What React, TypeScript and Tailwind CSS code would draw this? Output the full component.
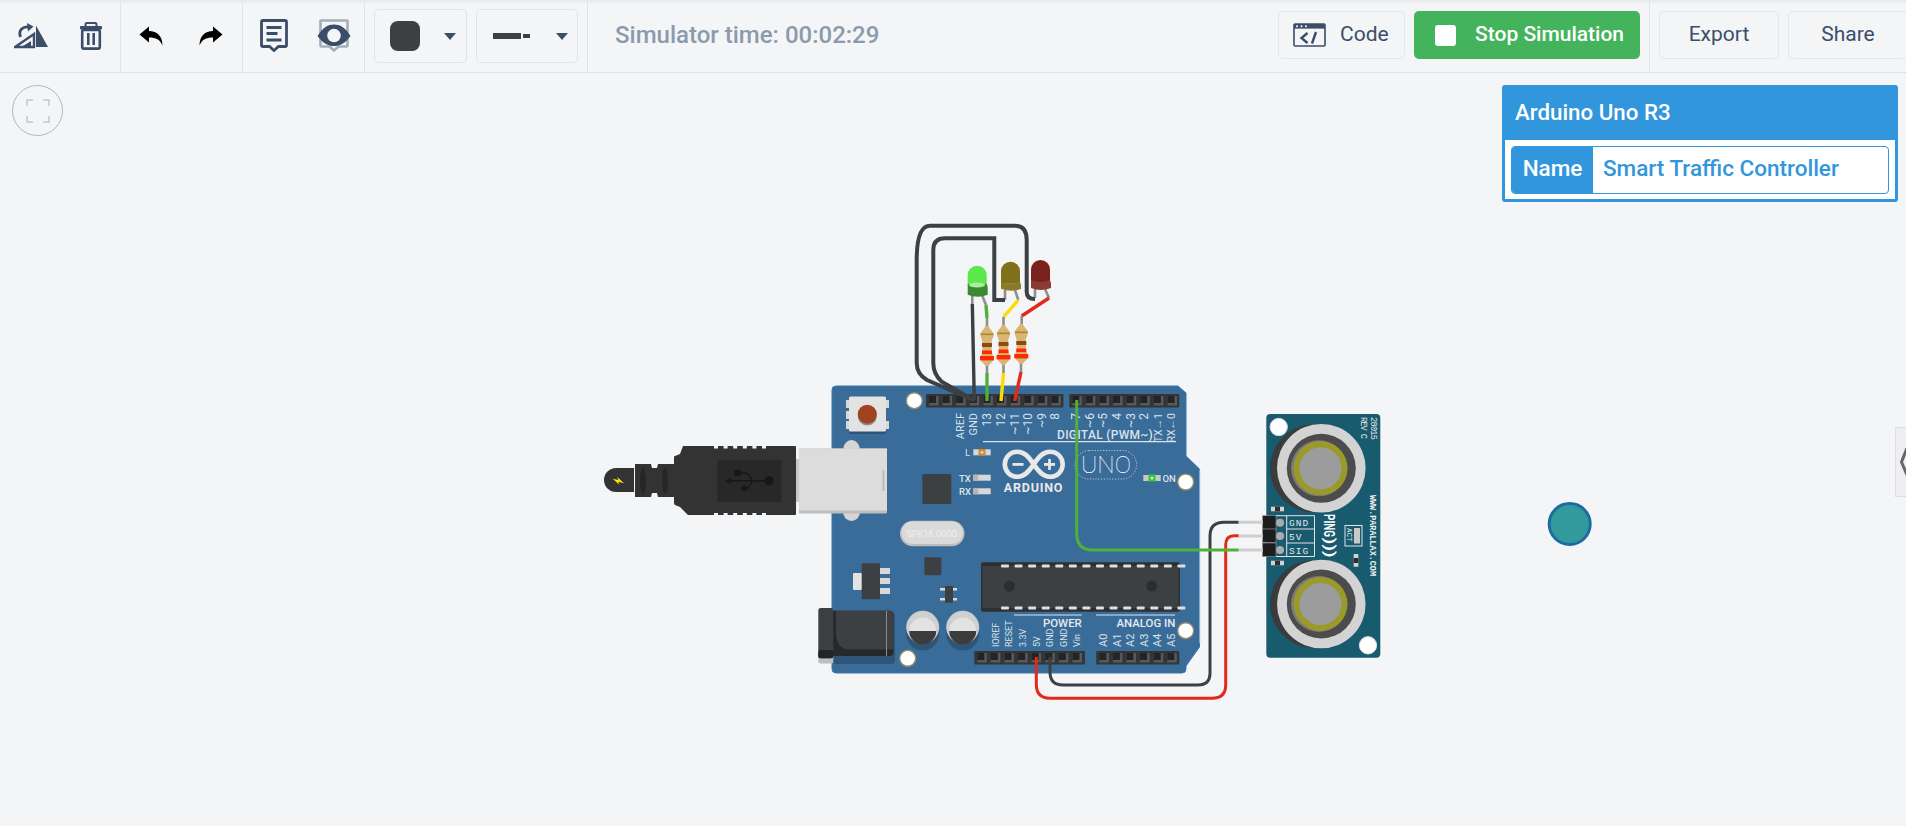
import React from 'react';

const range = (n: number) => Array.from({ length: n }, (_, i) => i);

const FlipIcon = () => (
    <svg width="36" height="26" viewBox="0 0 36 26" className="ml-[2px]">
        <path d="M22 2.5 L34 24 L22 24 Z" fill="#3a4e69" />
        <path d="M1 24 L20 24 L20 11 Z" fill="none" stroke="#3a4e69" strokeWidth="2.4" strokeLinejoin="miter" />
        <path d="M6.5 14 C4 7 9 3 15 4" fill="none" stroke="#3a4e69" strokeWidth="2.8" />
        <path d="M13 0 L19.5 3.6 L14 8.5 Z" fill="#3a4e69" />
        <path d="M9 23 L17 23 L17 18 Z" fill="#3a4e69" />
    </svg>
);

const TrashIcon = () => (
    <svg width="24" height="28" viewBox="0 0 24 28">
        <path d="M6.5 4 V2.5 Q6.5 1 8 1 H16 Q17.5 1 17.5 2.5 V4" fill="none" stroke="#3a4e69" strokeWidth="2" />
        <rect x="1" y="4" width="22" height="3.4" rx="1" fill="#3a4e69" />
        <rect x="3.2" y="8" width="17.6" height="18.6" rx="1.5" fill="none" stroke="#3a4e69" strokeWidth="2.6" />
        <rect x="8" y="11" width="2.6" height="12" fill="#3a4e69" />
        <rect x="13.4" y="11" width="2.6" height="12" fill="#3a4e69" />
    </svg>
);

const UndoIcon = ({ flip }: { flip?: boolean }) => (
    <svg width="24" height="20" viewBox="0 0 24 20" className={flip ? '-scale-x-100' : ''}>
        <path d="M0.5 8.5 L10 0.5 V5 C18 5 23.5 10 23.5 19.5 C21 13.5 17 11.5 10 11.5 V16.5 Z" fill="#000" />
    </svg>
);

const NoteIcon = () => (
    <svg width="28" height="33" viewBox="0 0 28 33">
        <path d="M3 1.5 H25 Q26.5 1.5 26.5 3 V26 Q26.5 27.5 25 27.5 H18.5 L14 31.5 L9.5 27.5 H3 Q1.5 27.5 1.5 26 V3 Q1.5 1.5 3 1.5 Z" fill="none" stroke="#3a4e69" strokeWidth="2.8" />
        <rect x="6.5" y="7" width="15" height="3" fill="#3a4e69" />
        <rect x="6.5" y="13" width="11" height="3" fill="#3a4e69" />
        <rect x="6.5" y="19.5" width="15" height="3" fill="#3a4e69" />
    </svg>
);

const EyeIcon = () => (
    <svg width="34" height="33" viewBox="0 0 34 33">
        <path d="M4 1.5 H30 Q30.5 1.5 30.5 2 V26.5 Q30.5 27.5 29.5 27.5 H21.5 L17 31.5 L12.5 27.5 H4.5 Q3.5 27.5 3.5 26.5 V2 Q3.5 1.5 4 1.5 Z" fill="none" stroke="#a4aeba" strokeWidth="2.6" />
        <path d="M0.5 17 C6 8 11 5.5 17 5.5 C23 5.5 28 8 33.5 17 C28 24.5 23 27 17 27 C11 27 6 24.5 0.5 17 Z" fill="#3a4e69" />
        <circle cx="17" cy="16.5" r="6.8" fill="#f4f5f7" />
    </svg>
);

const CodeIcon = () => (
    <svg width="33" height="24" viewBox="0 0 33 24">
        <rect x="1" y="1" width="31" height="22" rx="1" fill="none" stroke="#3a4e69" strokeWidth="1.6" />
        <rect x="1" y="1" width="31" height="4.6" fill="#3a4e69" />
        <circle cx="4" cy="3.2" r="1" fill="#fff" />
        <circle cx="8.5" cy="3.2" r="1" fill="#fff" />
        <circle cx="13" cy="3.2" r="1" fill="#fff" />
        <path d="M14.5 10 L8.5 15 L14.5 20" fill="none" stroke="#3a4e69" strokeWidth="2.4" />
        <path d="M23 9 L19 20.5" fill="none" stroke="#3a4e69" strokeWidth="2.4" />
    </svg>
);

const Caret = () => <span className="h-0 w-0 border-x-[6px] border-t-[7px] border-x-transparent border-t-[#3a4e69]" />;

const IconButton = ({ children }: { children: React.ReactNode }) => (
    <button className="flex h-[71px] w-[60px] shrink-0 items-center justify-center">{children}</button>
);

const Toolbar = () => (
    <header className="relative flex h-[73px] shrink-0 overflow-hidden border-b border-[#dfe2e7]">
        <div className="absolute inset-x-0 top-0 h-[4px] bg-gradient-to-b from-[#e6e7e9] to-transparent" />
        <div className="flex w-[121px] shrink-0 border-r border-[#e0e3e7] pl-[1px]">
            <IconButton><FlipIcon /></IconButton>
            <IconButton><TrashIcon /></IconButton>
        </div>
        <div className="flex w-[122px] shrink-0 border-r border-[#e0e3e7]">
            <IconButton><UndoIcon /></IconButton>
            <IconButton><UndoIcon flip /></IconButton>
        </div>
        <div className="flex w-[122px] shrink-0 border-r border-[#e0e3e7] pl-[1px]">
            <IconButton><NoteIcon /></IconButton>
            <IconButton><EyeIcon /></IconButton>
        </div>
        <div className="flex w-[223px] shrink-0 items-center gap-[9px] border-r border-[#e0e3e7] pl-[9px]">
            <div className="flex h-[54px] w-[93px] items-center rounded-[5px] border border-[#e0e3e7] pl-[15px]">
                <span className="h-[30px] w-[30px] rounded-[8px] bg-[#3c4043]" />
                <span className="ml-[24px] flex"><Caret /></span>
            </div>
            <div className="flex h-[54px] w-[102px] items-center rounded-[5px] border border-[#e0e3e7] pl-[16px]">
                <span className="h-[6px] w-[28px] bg-[#3c4043]" />
                <span className="ml-[2px] h-[4px] w-[7px] bg-[#3c4043]" />
                <span className="ml-[26px] flex"><Caret /></span>
            </div>
        </div>
        <div className="flex flex-1 items-center pb-[2px] pl-[27px] text-[24px] font-medium text-[#8c9aad]">Simulator time: 00:02:29</div>
        <div className="flex w-[628px] shrink-0 items-start text-[21px]">
            <button className="mt-[11px] flex h-[48px] w-[127px] shrink-0 items-center rounded-[5px] border border-[#e3e6ea] pl-[14px] text-[#3a4e69]">
                <CodeIcon />
                <span className="ml-[14px]">Code</span>
            </button>
            <button className="ml-[9px] mt-[11px] flex h-[48px] w-[226px] shrink-0 items-center rounded-[5px] bg-[#44b45c] pl-[21px] font-medium text-white">
                <span className="h-[21px] w-[21px] rounded-[3px] bg-white" />
                <span className="ml-[19px] whitespace-nowrap">Stop Simulation</span>
            </button>
            <div className="ml-[9px] h-[71px] w-[1px] shrink-0 bg-[#e0e3e7]" />
            <button className="ml-[9px] mt-[11px] h-[48px] w-[120px] shrink-0 rounded-[5px] border border-[#e3e6ea] text-[#3a4e69]">Export</button>
            <button className="ml-[9px] mt-[11px] h-[48px] w-[120px] shrink-0 rounded-[5px] border border-[#e3e6ea] text-[#3a4e69]">Share</button>
        </div>
    </header>
);

const Pins = ({ x, y, n, w }: { x: number; y: number; n: number; w: number }) => (
    <g>
        <rect x={x} y={y} width={w} height="13.4" fill="#333536" rx="1" />
        {range(n).map((i) => (
            <g key={i}>
                <rect x={x + 3 + i * 13.6} y={y + 2} width="9.5" height="9.5" fill="#58595a" />
                <rect x={x + 3 + i * 13.6} y={y + 2} width="7" height="7" fill="#232425" />
            </g>
        ))}
    </g>
);

const Hole = ({ x, y }: { x: number; y: number }) => <circle cx={x} cy={y} r="8" fill="#fff" stroke="#8e8f63" strokeWidth="1.4" />;

const RotLabel = ({ x, y, t, end, size = 11 }: { x: number; y: number; t: string; end?: boolean; size?: number }) => (
    <text
        transform={`translate(${x} ${y}) rotate(-90)`}
        textAnchor={end ? 'end' : 'start'}
        fontSize={size}
        fill="#dbe3ea"
        dominantBaseline="middle"
    >
        {t}
    </text>
);

const Resistor = ({ x, y }: { x: number; y: number }) => (
    <g transform={`translate(${x} ${y})`}>
        <path d="M-1.5 -1 C-3 3 -6.5 4 -6.5 8 C-6.5 11 -4.6 12 -4.6 16 V24 C-4.6 27 -6.5 28 -6.5 31 C-6.5 35 -3 36 -1.5 39 H1.5 C3 36 6.5 35 6.5 31 C6.5 28 4.6 27 4.6 24 V16 C4.6 12 6.5 11 6.5 8 C6.5 4 3 3 1.5 -1 Z" fill="#d9b477" />
        <rect x="-6.5" y="6.5" width="13" height="1.6" fill="#a78a24" />
        <rect x="-5" y="16" width="10" height="4" fill="#8a4a10" />
        <rect x="-5" y="23.5" width="10" height="3.6" fill="#ff2a00" />
        <rect x="-7" y="29" width="14" height="4.4" fill="#ff2a00" />
    </g>
);

const Led = ({ x, top, h, fill, base, baseH }: { x: number; top: number; h: number; fill: string; base: string; baseH: number }) => (
    <g>
        <path d={`M${x} ${top + 9.5} a9.5 9.5 0 0 1 19 0 V${top + h} H${x} Z`} fill={fill} />
        <path d={`M${x} ${top + h - 2} Q${x + 9.5} ${top + h + 2} ${x + 19} ${top + h - 2} L${x + 20} ${top + h + 1} V${top + h + baseH - 4} Q${x + 10} ${top + h + baseH} ${x} ${top + h + baseH - 4} Z`} fill={base} />
    </g>
);

const PingEye = ({ cy }: { cy: number }) => (
    <g>
        <circle cx="1314" cy={cy} r="44" fill="#3a3b3c" />
        <circle cx="1321.3" cy={cy} r="44.3" fill="#d3d3d3" />
        <circle cx="1321.3" cy={cy} r="34.5" fill="#4c4c4c" />
        <circle cx="1319" cy={cy} r="28" fill="#7b7b7b" />
        <circle cx="1320.5" cy={cy} r="27" fill="#9a9a2c" />
        <circle cx="1320.5" cy={cy} r="21" fill="#9c9c9c" />
    </g>
);

const Circuit = () => (
    <svg width="1906" height="753" viewBox="0 73 1906 753" className="absolute left-0 top-0">
        {/* usb cable */}
        <path d="M634 468 H616 A12 12 0 0 0 616 492 H634 Z" fill="#333" />
        <path d="M635 464 H651 L652 468 H657 L658 464 H674 V497 H658 L657 493 H652 L651 497 H635 Z" fill="#333" />
        <ellipse cx="643" cy="480.5" rx="3" ry="13" fill="#262626" />
        <ellipse cx="665" cy="480.5" rx="3" ry="13" fill="#262626" />
        <path d="M612.7 478.7 L618.3 480 L617.3 477 L624 483.3 L618.3 481.7 L619.3 484.7 Z" fill="#ffe000" />
        {/* board */}
        <path d="M836 386 H1178 L1186 393 V456 L1199.5 469 V647 L1186 666 V669 Q1186 673 1182 673 H836 Q832 673 832 669 V390 Q832 386 836 386 Z" fill="#396c99" stroke="#3a76ad" strokeWidth="1" />
        <line x1="1200" y1="470" x2="1200" y2="643" stroke="#cfe2f3" strokeWidth="1" />
        <ellipse cx="851.5" cy="450" rx="8.5" ry="10" fill="#d5d5d5" />
        <ellipse cx="851.5" cy="512" rx="8.5" ry="9" fill="#d5d5d5" />
        {/* usb socket */}
        <rect x="795" y="459" width="6" height="43" fill="#c9c9c9" />
        <rect x="799" y="448.5" width="88" height="65" rx="1" fill="#bdbdbd" />
        <rect x="799" y="448.5" width="88" height="62" fill="#dcdcdc" />
        <rect x="882.5" y="470" width="2" height="21" fill="#bcbcbc" />
        <path d="M683 446 H795 Q796 446 796 447 V514 Q796 515 795 515 H688 L680 507 L675 505 Q674 504 674 503 V457 Q674 456 675 456 L680 454 Z" fill="#333" />
        {range(6).map((i) => (
            <g key={i}>
                <rect x={714 + i * 9.6} y="446" width="4" height="2.5" fill="#f4f5f7" />
                <rect x={714 + i * 9.6} y="513" width="4" height="2.5" fill="#f4f5f7" />
            </g>
        ))}
        <rect x="717.5" y="460" width="64" height="42" fill="#282828" />
        <path d="M727 480.7 H769 M753 480.7 L746.7 473.3 H739 M753 480.7 L748 488.3 H744" fill="none" stroke="#171717" strokeWidth="1.4" />
        <path d="M725 480.7 l6 -3.5 v7 Z" fill="#171717" />
        <rect x="734.3" y="470" width="6.4" height="6.2" fill="#171717" />
        <circle cx="769" cy="480.7" r="4.6" fill="#171717" />
        <circle cx="744.3" cy="488.3" r="2.8" fill="#171717" />
        {/* reset button */}
        <rect x="846" y="400" width="3" height="8" fill="#d9d9d9" />
        <rect x="846" y="411" width="3" height="8" fill="#d9d9d9" />
        <rect x="846" y="421" width="3" height="8" fill="#d9d9d9" />
        <rect x="886" y="400" width="3" height="8" fill="#d9d9d9" />
        <rect x="886" y="421" width="3" height="8" fill="#d9d9d9" />
        <rect x="849" y="398" width="37" height="36" rx="1.5" fill="#2e5578" />
        <rect x="849" y="396.5" width="37" height="35" rx="1.5" fill="#e3e3e3" />
        <circle cx="867.3" cy="416" r="9.5" fill="#8d8d8d" />
        <circle cx="867.3" cy="414.3" r="9.5" fill="#a1431f" />
        <Pins x={926} y={394} n={10} w={137.4} />
        <Pins x={1069.3} y={394} n={8} w={110} />
        <Pins x={974.3} y={651} n={8} w={110.7} />
        <Pins x={1096.3} y={651} n={6} w={83} />
        <Hole x={914.3} y={400.7} />
        <Hole x={1185.7} y={482} />
        <Hole x={1185.7} y={630.7} />
        <Hole x={907.7} y={658.3} />
        {/* pin labels */}
        <RotLabel x={961} y={413} t="AREF" end />
        <RotLabel x={974.5} y={413} t="GND" end />
        {['13', '12', '~11', '~10', '~9', '8'].map((t, i) => (
            <RotLabel key={t} x={988.3 + i * 13.6} y={413} t={t} end size={12} />
        ))}
        {['7', '~6', '~5', '4', '~3', '2'].map((t, i) => (
            <RotLabel key={t} x={1077 + i * 13.65} y={413} t={t} end size={12} />
        ))}
        <RotLabel x={1159} y={413} t="TX→1" end size={10.5} />
        <RotLabel x={1172.6} y={413} t="RX←0" end size={10.5} />
        <text x="1057" y="439" fontSize="12" fontWeight="500" letterSpacing="0.3" fill="#dbe3ea">DIGITAL (PWM~)</text>
        <line x1="983" y1="441.7" x2="1176" y2="441.7" stroke="#dbe3ea" strokeWidth="1.2" />
        {['IOREF', 'RESET', '3.3V', '5V', 'GND', 'GND', 'Vin'].map((t, i) => (
            <RotLabel key={i} x={996.5 + i * 13.6} y={647} t={t} size={9} />
        ))}
        {['A0', 'A1', 'A2', 'A3', 'A4', 'A5'].map((t, i) => (
            <RotLabel key={t} x={1104 + i * 13.6} y={647} t={t} size={11} />
        ))}
        <line x1="1014" y1="615" x2="1081.7" y2="615" stroke="#dbe3ea" strokeWidth="1.2" />
        <line x1="1096" y1="615" x2="1175" y2="615" stroke="#dbe3ea" strokeWidth="1.2" />
        <text x="1043" y="627" fontSize="11.4" fontWeight="500" fill="#e6ebf0">POWER</text>
        <text x="1116.5" y="627" fontSize="11.4" fontWeight="500" fill="#e6ebf0">ANALOG IN</text>
        {/* leds on the board */}
        <rect x="973.3" y="449.3" width="17.4" height="6" fill="#d8d8d8" />
        <rect x="978.5" y="449" width="7" height="6.5" fill="#d08a2e" />
        <circle cx="982" cy="452.3" r="1.4" fill="#f5dca0" />
        <rect x="973.3" y="474.7" width="17.4" height="6" fill="#d8d8d8" />
        <rect x="973.3" y="474.7" width="5" height="6" fill="#b5b5b5" />
        <rect x="973.3" y="488.3" width="17.4" height="6" fill="#d8d8d8" />
        <rect x="973.3" y="488.3" width="5" height="6" fill="#b5b5b5" />
        <rect x="1143.3" y="475" width="17.4" height="6" fill="#c9c9c9" />
        <rect x="1148.5" y="474.5" width="7" height="7" fill="#39c53a" />
        <circle cx="1152" cy="478" r="1.5" fill="#c9f7c2" />
        <text x="965" y="456" fontSize="9.5" fill="#dbe3ea">L</text>
        <text x="959" y="481.5" fontSize="9.5" fontWeight="500" fill="#dbe3ea">TX</text>
        <text x="959" y="495" fontSize="9.5" fontWeight="500" fill="#dbe3ea">RX</text>
        <text x="1162.5" y="481.5" fontSize="9.5" fontWeight="500" fill="#dbe3ea">ON</text>
        {/* arduino logo */}
        <path d="M1033.7 464.3 C1029 457 1024.5 451.8 1017.5 451.8 C1010 451.8 1004.8 457.5 1004.8 464.3 C1004.8 471 1010 476.8 1017.5 476.8 C1024.5 476.8 1029 471.5 1033.7 464.3 C1038.5 457 1043 451.8 1050 451.8 C1057.5 451.8 1062.7 457.5 1062.7 464.3 C1062.7 471 1057.5 476.8 1050 476.8 C1043 476.8 1038.5 471.5 1033.7 464.3 Z" fill="none" stroke="#e8e8e8" strokeWidth="4.6" />
        <rect x="1012.5" y="463" width="11" height="2.8" fill="#e8e8e8" />
        <rect x="1044" y="463" width="11" height="2.8" fill="#e8e8e8" />
        <rect x="1048.1" y="458.9" width="2.8" height="11" fill="#e8e8e8" />
        <text x="1033.5" y="492" textAnchor="middle" fontSize="12.5" fontWeight="700" letterSpacing="0.8" fill="#e8e8e8">ARDUINO</text>
        <rect x="1075" y="450.5" width="61.5" height="28.5" rx="14" fill="none" stroke="#dbe3ea" strokeWidth="0.8" strokeDasharray="1.2 1.6" />
        <text x="1081" y="473" fontSize="24.5" fontWeight="100" fill="#fff">UNO</text>
        {/* chips */}
        <rect x="922.3" y="474" width="29" height="30" rx="1.5" fill="#3c4043" />
        <rect x="900" y="520.7" width="64.5" height="25.5" rx="12.7" fill="#bdbdbd" />
        <rect x="901.5" y="521.5" width="61.5" height="22.5" rx="11" fill="#dadada" />
        <text x="932" y="537" textAnchor="middle" fontSize="9" fill="#efefef">SPK16.000G</text>
        <rect x="924.3" y="557.3" width="17" height="18" rx="1" fill="#3c4043" />
        <rect x="940" y="588" width="5" height="2.5" fill="#d8d8d8" />
        <rect x="940" y="598" width="5" height="2.5" fill="#d8d8d8" />
        <rect x="952" y="588" width="5" height="2.5" fill="#d8d8d8" />
        <rect x="952" y="598" width="5" height="2.5" fill="#d8d8d8" />
        <rect x="945" y="586" width="8" height="16.7" fill="#3c4043" />
        <rect x="853" y="573" width="9" height="17" rx="1" fill="#e3e3e3" />
        <rect x="880" y="568" width="10" height="6" fill="#d8d8d8" />
        <rect x="880" y="578" width="10" height="6" fill="#d8d8d8" />
        <rect x="880" y="588" width="10" height="6" fill="#d8d8d8" />
        <rect x="861.7" y="563.3" width="18.3" height="36" rx="1" fill="#3c4043" />
        <rect x="981" y="562.3" width="199" height="49.4" rx="2" fill="#2d2f31" />
        <rect x="982.5" y="566" width="196" height="42" fill="#3c4043" />
        {range(14).map((i) => (
            <g key={i}>
                <rect x={1001 + i * 13.57} y="564.6" width="8" height="3" rx="1" fill="#dfdfdf" />
                <rect x={1001 + i * 13.57} y="606.6" width="8" height="3" rx="1" fill="#dfdfdf" />
            </g>
        ))}
        <circle cx="1009.3" cy="586" r="5.5" fill="#2b2d30" />
        <circle cx="1151.7" cy="586" r="5.5" fill="#2b2d30" />
        {/* capacitors */}
        {[922.7, 962.7].map((cx) => (
            <g key={cx}>
                <circle cx={cx} cy="634" r="16.5" fill="#2e5578" />
                <circle cx={cx} cy="627.3" r="16.5" fill="#cfcfcf" />
                <path d={`M${cx - 13.5} 631 A13.5 13.5 0 0 0 ${cx + 13.5} 631 Z`} fill="#3c3c3c" />
                <path d={`M${cx - 13.5} 631 A13.5 13.5 0 0 1 ${cx + 13.5} 631 Z`} fill="#e2e2e2" />
            </g>
        ))}
        {/* power jack */}
        <rect x="833" y="612" width="62" height="52" rx="4" fill="#2e5578" />
        <rect x="818.3" y="648" width="15" height="15.5" rx="2" fill="#bfbfbf" />
        <rect x="830" y="610.7" width="63.5" height="45.3" rx="4" fill="#262829" />
        <path d="M836 610.7 H890 Q893.5 610.7 893.5 614 V649.5 H850 Q836 649.5 836 632 Z" fill="#3c4043" />
        <rect x="886" y="611" width="1" height="45" fill="#8b8d8f" />
        <rect x="818.3" y="608" width="15" height="50.3" rx="2.5" fill="#3c4043" />
        <rect x="818.3" y="650" width="15" height="8.3" rx="2.5" fill="#232425" />
        {/* ping sensor */}
        <rect x="1266.3" y="414" width="114" height="243.7" rx="4" fill="#185a6e" />
        <PingEye cy={468.3} />
        <PingEye cy={604} />
        <circle cx="1278.7" cy="427" r="8.7" fill="#fff" stroke="#d5d5d5" />
        <circle cx="1368" cy="645.3" r="8.7" fill="#fff" stroke="#d5d5d5" />
        <rect x="1271" y="506.7" width="13" height="4.6" fill="#d2d2d2" />
        <rect x="1275" y="506.7" width="5" height="4.6" fill="#2e2e2e" />
        <rect x="1271" y="560.7" width="13" height="4.6" fill="#d2d2d2" />
        <rect x="1275" y="560.7" width="5" height="4.6" fill="#2e2e2e" />
        <rect x="1353.7" y="554" width="4.6" height="12.7" fill="#d2d2d2" />
        <rect x="1353.7" y="558" width="4.6" height="5" fill="#2e2e2e" />
        <path d="M1276 515.7 H1314.5 V556.5 H1276 M1286.7 515.7 V556.5 M1286.7 529 H1314.5 M1286.7 543 H1314.5" fill="none" stroke="#e3e3e3" strokeWidth="1" />
        {[522.7, 536, 550].map((cy) => (
            <g key={cy}>
                <circle cx="1280" cy={cy} r="4" fill="#acacac" />
                <rect x="1262.5" y={cy - 7} width="13.5" height="13.5" fill="#1d1d1d" stroke="#9a9a9a" strokeWidth="0.6" />
            </g>
        ))}
        <g className="font-['Liberation_Mono',monospace]">
            <text x="1289" y="526" fontSize="9.5" letterSpacing="1" fill="#e6e6e6">GND</text>
            <text x="1289" y="539.5" fontSize="9.5" letterSpacing="1" fill="#e6e6e6">5V</text>
            <text x="1289" y="553.5" fontSize="9.5" letterSpacing="1" fill="#e6e6e6">SIG</text>
            <text transform="translate(1370 495) rotate(90)" fontSize="9" fontWeight="700" textLength="81" lengthAdjust="spacingAndGlyphs" fill="#eef0f1">WWW.PARALLAX.COM</text>
            <text transform="translate(1370.5 417) rotate(90)" fontSize="8.6" textLength="23" fill="#e6e6e6">28015</text>
            <text transform="translate(1360.5 417) rotate(90)" fontSize="8.6" textLength="22" fill="#e6e6e6">REV C</text>
            <text transform="translate(1347 528) rotate(90)" fontSize="7.5" fill="#e6e6e6">ACT</text>
        </g>
        <text transform="translate(1324 514) rotate(90)" fontSize="14" fontWeight="700" textLength="23" lengthAdjust="spacingAndGlyphs" fill="#fff">PING</text>
        <text transform="translate(1324.5 537.5) rotate(90)" fontSize="14" fontWeight="700" textLength="20" lengthAdjust="spacingAndGlyphs" fill="#fff">)))</text>
        <rect x="1345" y="525.5" width="17" height="20.5" fill="none" stroke="#dfe5e8" strokeWidth="1" />
        <rect x="1354" y="528" width="6" height="15.5" fill="#c9c9c9" />
        {/* wires to the sensor */}
        <path d="M1238 522.3 H1263 M1238 536 H1263 M1238 550 H1263" stroke="#cfcfcf" strokeWidth="3" />
        <path d="M1050 657 V672 Q1050 685 1063 685 H1198 Q1210 685 1210 673 V536 Q1210 522.3 1224 522.3 H1238.5" fill="none" stroke="#3c4043" strokeWidth="3" />
        <path d="M1036.3 657 V684 Q1036.3 698.3 1050 698.3 H1212 Q1225.7 698.3 1225.7 685 V545 Q1225.7 535.7 1234 535.7 H1238.5" fill="none" stroke="#e12a1b" strokeWidth="3" />
        <path d="M1076.7 400 V533 Q1076.7 550 1092 550 H1238.5" fill="none" stroke="#4fb03a" strokeWidth="3" />
        {/* led legs */}
        <path d="M972.3 295 V304 M982 295 L986 305 M1005 290 V300 M1015 290 L1018.3 300 M1035 289 V298 M1045 289 L1049 298" fill="none" stroke="#8f8f8f" strokeWidth="2.6" />
        <path d="M987 365 V373 M1003.5 365 V373 M1021 363 V372" fill="none" stroke="#8f8f8f" strokeWidth="2.6" />
        {/* ground wires */}
        <path d="M916.7 363 V260 Q916.7 225.7 930 225.7 H1015 Q1026.7 225.7 1026.7 240 V292 Q1026.7 299 1035 299" fill="none" stroke="#3c4043" strokeWidth="4" />
        <path d="M916.7 363 Q916.7 374 927 380 L974.3 400.5" fill="none" stroke="#3c4043" strokeWidth="4" />
        <path d="M933.3 363 V250 Q933.3 238.3 945 238.3 H994.3 V300 H1005" fill="none" stroke="#3c4043" strokeWidth="4" />
        <path d="M933.3 363 Q933.3 374 941.7 381.7 L974.3 400.5" fill="none" stroke="#3c4043" strokeWidth="4" />
        <path d="M972.3 304 L974.3 400.5" fill="none" stroke="#3c4043" strokeWidth="3.4" />
        {/* coloured wires */}
        <path d="M986 305 L987 318" stroke="#4fb03a" strokeWidth="3.4" />
        <path d="M1018.3 300 L1003.5 317" stroke="#ffdc00" strokeWidth="3.4" />
        <path d="M1049 298 L1021.7 316" stroke="#e12a1b" strokeWidth="3.4" />
        <path d="M987 373 V401" stroke="#4fb03a" strokeWidth="3.4" />
        <path d="M1003.5 373 L1001 401" stroke="#ffdc00" strokeWidth="3.4" />
        <path d="M1021 372 L1014.7 401" stroke="#e12a1b" strokeWidth="3.4" />
        <path d="M987 318 V328 M1003.5 317 V326 M1021.7 316 V325" stroke="#8f8f8f" strokeWidth="2.6" />
        <Resistor x={987} y={327} />
        <Resistor x={1003.5} y={326} />
        <Resistor x={1021.3} y={325} />
        <Led x={967.7} top={265.7} h={20} fill="#5ae84a" base="#3a8a30" baseH={13} />
        <ellipse cx="977" cy="285" rx="8" ry="2.5" fill="#a8eda0" />
        <Led x={1001} top={261.7} h={22} fill="#7f7019" base="#8b7a2b" baseH={9} />
        <Led x={1031} top={260} h={22} fill="#7a211c" base="#8c3a34" baseH={10} />
        {/* free component */}
        <circle cx="1569.7" cy="524" r="20.5" fill="#329a9c" stroke="#1f6aa0" strokeWidth="3" />
    </svg>
);

const App = () => (
    <div className="flex h-[826px] w-[1906px] flex-col overflow-hidden bg-[#f4f5f7] font-['Roboto',sans-serif]">
        <Toolbar />
        <main className="relative flex-1">
            <Circuit />
            <button className="absolute left-[12px] top-[12px] flex h-[51px] w-[51px] items-center justify-center rounded-full border border-[#b5b5b5]">
                <svg width="24" height="24" viewBox="0 0 24 24" fill="none" stroke="#c4c6c9" strokeWidth="1.5">
                    <path d="M1 7 V1 H7 M17 1 H23 V7 M1 17 V23 H7 M17 23 H23 V17" />
                </svg>
            </button>
            <section className="absolute left-[1502px] top-[12px] h-[117px] w-[396px] rounded-[3px] border-[3px] border-[#3296dc] bg-white">
                <div className="flex h-[52px] items-center bg-[#3296dc] pb-[3px] pl-[10px] text-[22.3px] font-medium text-white">Arduino Uno R3</div>
                <div className="mx-[6px] mt-[6px] flex h-[48px] overflow-hidden rounded-[4px] border border-[#3296dc] text-[22.5px] font-medium">
                    <span className="flex w-[81px] items-center justify-center bg-[#3296dc] pb-[2px] text-white">Name</span>
                    <span className="flex items-center pb-[2px] pl-[10px] text-[#3296dc]">Smart Traffic Controller</span>
                </div>
            </section>
            <div className="absolute left-[1895px] top-[354px] flex h-[70px] w-[20px] items-center border border-[#dedfe1] bg-[#efeff1] pl-[4px]">
                <svg width="10" height="28" viewBox="0 0 10 28" fill="none" stroke="#666" strokeWidth="3">
                    <path d="M7 0 L1.5 14 L7 27" />
                </svg>
            </div>
        </main>
    </div>
);

export default App;
